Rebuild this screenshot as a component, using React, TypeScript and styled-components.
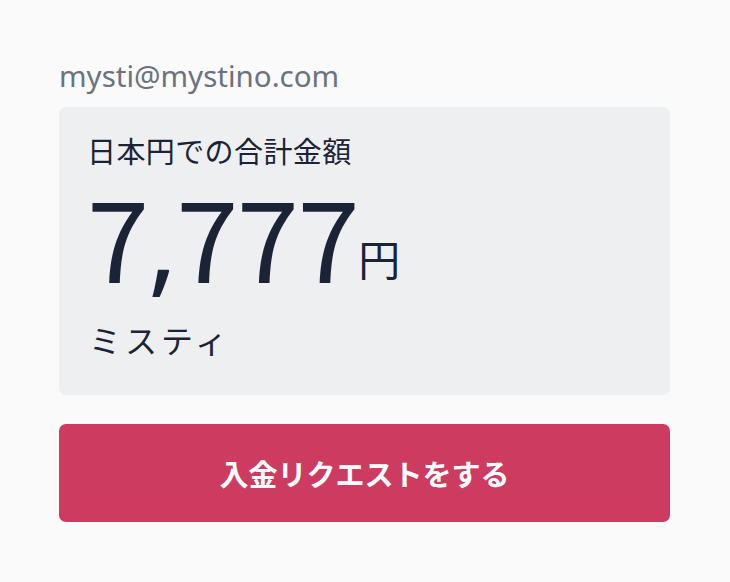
import React from 'react'
import styled, { createGlobalStyle } from 'styled-components'

const GlobalStyle = createGlobalStyle`
  html, body {
    margin: 0;
    padding: 0;
    background: #fafafa;
  }
  body {
    font-family: "Noto Sans", "Noto Sans CJK JP", sans-serif;
  }
`

const Page = styled.div`
  width: 730px;
  height: 582px;
  box-sizing: border-box;
  padding: 58px 60px 0 59px;
  display: flex;
  flex-direction: column;
`

const Email = styled.div`
  font-size: 29.5px;
  line-height: 36px;
  color: #6b7280;
  margin-bottom: 13px;
`

const Card = styled.div`
  background: #eeeff1;
  border-radius: 7px;
  height: 288px;
  box-sizing: border-box;
  padding: 25px 28px 0;
  display: flex;
  flex-direction: column;
`

const Label = styled.div`
  font-family: "Noto Sans CJK JP", sans-serif;
  font-size: 29px;
  line-height: 36px;
  letter-spacing: 0.4px;
  color: #1b2336;
`

const AmountRow = styled.div`
  display: flex;
  align-items: flex-end;
  color: #1b2336;
  margin-top: 14px;
  height: 104px;
`

const Amount = styled.span`
  font-family: "Noto Sans CJK JP", sans-serif;
  font-size: 112px;
  line-height: 104px;
  letter-spacing: -1.5px;
`

const Comma = styled.span`
  font-family: "Noto Sans", sans-serif;
  line-height: 0;
`

const Unit = styled.span`
  font-family: "Noto Sans CJK JP", sans-serif;
  font-size: 42px;
  line-height: 42px;
  margin-left: 0;
  margin-bottom: 7px;
`

const Name = styled.div`
  font-family: "Noto Sans CJK JP", sans-serif;
  font-size: 32px;
  line-height: 44px;
  letter-spacing: 4px;
  color: #1b2336;
  margin-top: 31px;
  margin-left: 2px;
`

const RequestButton = styled.button`
  margin-top: 29px;
  height: 98px;
  width: 100%;
  border: none;
  border-radius: 7px;
  background: #cd3b61;
  color: #ffffff;
  font-family: "Noto Sans CJK JP", sans-serif;
  font-size: 29px;
  font-weight: 700;
  cursor: pointer;
`

export default function App() {
  return (
    <>
      <GlobalStyle />
      <Page>
        <Email>mysti@mystino.com</Email>
        <Card>
          <Label>日本円での合計金額</Label>
          <AmountRow>
            <Amount>
              7<Comma>,</Comma>777
            </Amount>
            <Unit>円</Unit>
          </AmountRow>
          <Name>ミスティ</Name>
        </Card>
        <RequestButton type="button">入金リクエストをする</RequestButton>
      </Page>
    </>
  )
}
